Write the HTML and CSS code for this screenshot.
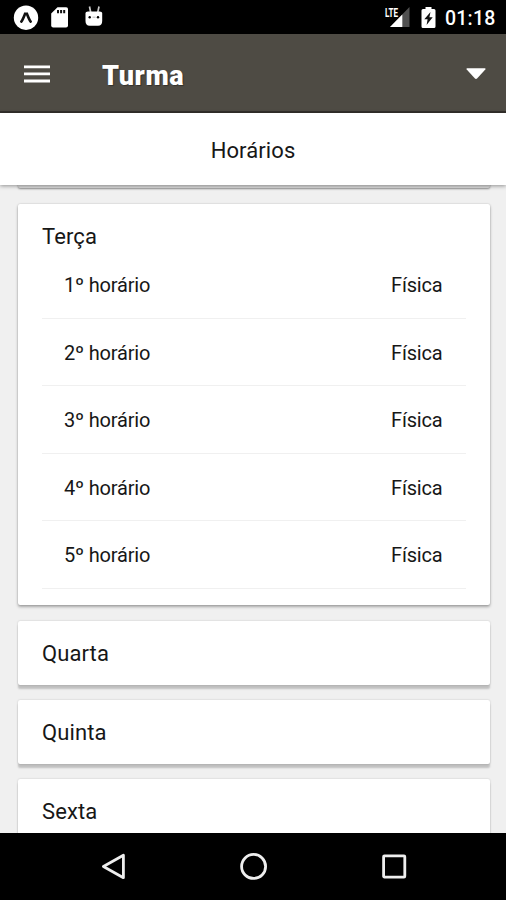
FILE: index.html
```html
<!DOCTYPE html>
<html lang="pt-BR">
<head>
<meta charset="utf-8">
<title>Turma</title>
<link rel="stylesheet" href="styles.css">
</head>
<body>
<div class="screen">
  <div class="status">
    <svg class="expo" width="26" height="26" viewBox="0 0 26 26"><circle cx="13" cy="12.7" r="12.2" fill="#fff"/><path d="M8.3 16.6C9.7 15 11 11.4 12 8.9H14C15 11.4 16.3 15 17.7 16.6" fill="none" stroke="#111" stroke-width="2.6" stroke-linecap="round"/></svg>
    <svg class="sd" width="18" height="22" viewBox="0 0 18 22"><path d="M6.5.3H15.2Q17 .3 17 2.1V18.6Q17 20.6 15 20.6H2.2Q.2 20.6 .2 18.6V6.6Z" fill="#fff"/><path d="M7 3V6.2M10.1 3V6.2M13.2 3V6.2" stroke="#111" stroke-width="2"/></svg>
    <svg class="cat" width="18" height="22" viewBox="0 0 18 22"><path d="M4.5 .5L5.8 7M14 .5L12.6 7" stroke="#ccc" stroke-width="1.7"/><path d="M.5 7Q.5 5.5 3 5.5H14.7Q17.2 5.5 17.2 7V15Q17.2 19.8 13 19.8H4.7Q.5 19.8 .5 15Z" fill="#fff"/><circle cx="4.7" cy="11.2" r="1.2"/><circle cx="13" cy="11.2" r="1.2"/><path d="M7.5 11.2H10.5" stroke="#bbb"/></svg>
    <span class="lte">LTE</span>
    <svg class="signal" width="22" height="21" viewBox="0 0 22 21"><path d="M21.5 0V20H2Z" fill="#505050"/><path d="M14.3 7.4V20H2Z" fill="#fff"/></svg>
    <svg class="battery" width="15" height="22" viewBox="0 0 15 22"><path d="M4.5 0H10.5V2H13Q14.5 2 14.5 3.5V19.5Q14.5 21 13 21H2Q.5 21 .5 19.5V3.5Q.5 2 2 2H4.5Z" fill="#fff"/><path d="M9.5 5L3.3 12.2H6.6L5.6 18L11.7 10.3H8.4Z" fill="#111"/></svg>
    <span class="clock">01:18</span>
  </div>
  <header class="bar">
    <svg width="26" height="18" viewBox="0 0 26 18"><path d="M0 1.8H26M0 8.9H26M0 16H26" stroke="#fff" stroke-width="2.8"/></svg>
    <h1>Turma</h1>
    <svg width="20" height="12" viewBox="0 0 20 12"><path d="M1 .3H19Q20 .6 19.3 1.5L11.3 10.3Q10 11.6 8.7 10.3L.7 1.5Q0 .6 1 .3Z" fill="#fff"/></svg>
  </header>
  <div class="subtitle">Horários</div>
  <main class="list">
    <section class="card previous"></section>
    <section class="card open">
      <h2>Terça</h2>
      <div class="row"><span>1º horário</span><span>Física</span></div>
      <div class="row"><span>2º horário</span><span>Física</span></div>
      <div class="row"><span>3º horário</span><span>Física</span></div>
      <div class="row"><span>4º horário</span><span>Física</span></div>
      <div class="row"><span>5º horário</span><span>Física</span></div>
    </section>
    <section class="card day"><h2>Quarta</h2></section>
    <section class="card day"><h2>Quinta</h2></section>
    <section class="card day"><h2>Sexta</h2></section>
  </main>
  <nav class="nav">
    <svg width="28" height="28" viewBox="0 0 28 28"><path d="M25.4 2.3V24.7L5.4 13.5Z"/></svg>
    <svg width="28" height="28" viewBox="0 0 28 28"><circle cx="14.6" cy="13.4" r="12"/></svg>
    <svg width="28" height="28" viewBox="0 0 28 28"><rect x="3.6" y="2.9" width="21.2" height="21.2" rx=".8"/></svg>
  </nav>
</div>
</body>
</html>
```

FILE: styles.css
```css
* { box-sizing: border-box; }
body { margin: 0; font-family: Roboto, sans-serif; color: #171717; }
svg { display: block; flex: none; }
.screen { width: 506px; height: 900px; display: flex; flex-direction: column; overflow: hidden; background: #f0f0f0; }
.status { height: 34px; flex: none; display: flex; align-items: flex-start; padding: 0 10.5px 0 13px; background: #000; color: #fff; }
.expo { margin-top: 5px; }
.sd { margin: 7px 0 0 12px; }
.cat { margin: 6px 0 0 16px; }
.lte { margin: 6px -10px 0 auto; font-size: 13px; line-height: 13px; font-weight: 700; transform: scaleX(.62); transform-origin: right; }
.signal { margin-top: 7px; }
.battery { margin: 7px 9px 0 11px; }
.clock { font-size: 19.5px; line-height: 37px; font-weight: 500; letter-spacing: .2px; }
.bar { height: 79px; flex: none; display: flex; align-items: center; padding: 2px 20px 0 24px; background: #4e4b44; border-bottom: 2px solid #33302c; color: #fff; }
.bar h1 { flex: 1; margin: 4px 0 0 52px; font-size: 27px; line-height: 32px; font-weight: 900; letter-spacing: .6px; text-shadow: 1px 1px 1px rgba(0,0,0,.35); }
.subtitle { height: 72px; flex: none; position: relative; background: #fff; text-align: center; font-size: 22px; line-height: 75px; letter-spacing: .1px; box-shadow: 0 1px 4px rgba(0,0,0,.4); }
.list { flex: 1; min-height: 0; overflow: hidden; display: flex; flex-direction: column; padding: 0 16.5px 0 18px; }
.card { flex: none; background: #fff; border-radius: 2px; box-shadow: 0 2px 3px rgba(0,0,0,.3), 0 0 2px rgba(0,0,0,.2); }
.card h2 { margin: 0; font-size: 22px; line-height: 32px; font-weight: 400; letter-spacing: .1px; }
.previous { height: 21px; margin-top: -18px; margin-bottom: 16px; background: #dcdcdc; box-shadow: 0 1px 2px rgba(0,0,0,.4); }
.open { height: 401px; padding: 17px 24px 0; margin-bottom: 16px; }
.open h2 { margin-bottom: -2px; }
.row { height: 67.5px; display: flex; justify-content: space-between; padding: 0 23px 0 22px; border-bottom: 1px solid #f0f0f0; font-size: 20px; line-height: 69px; letter-spacing: -.18px; }
.day { height: 64px; padding: 17px 24px 0; margin-bottom: 15.2px; box-shadow: 0 4px 2px rgba(0,0,0,.2), 0 0 2px rgba(0,0,0,.2); }
.nav { height: 67px; flex: none; display: flex; justify-content: space-between; align-items: center; padding: 0 98px; background: #000; }
.nav svg { fill: none; stroke: #eee; stroke-width: 2.8; stroke-linejoin: round; }
```
